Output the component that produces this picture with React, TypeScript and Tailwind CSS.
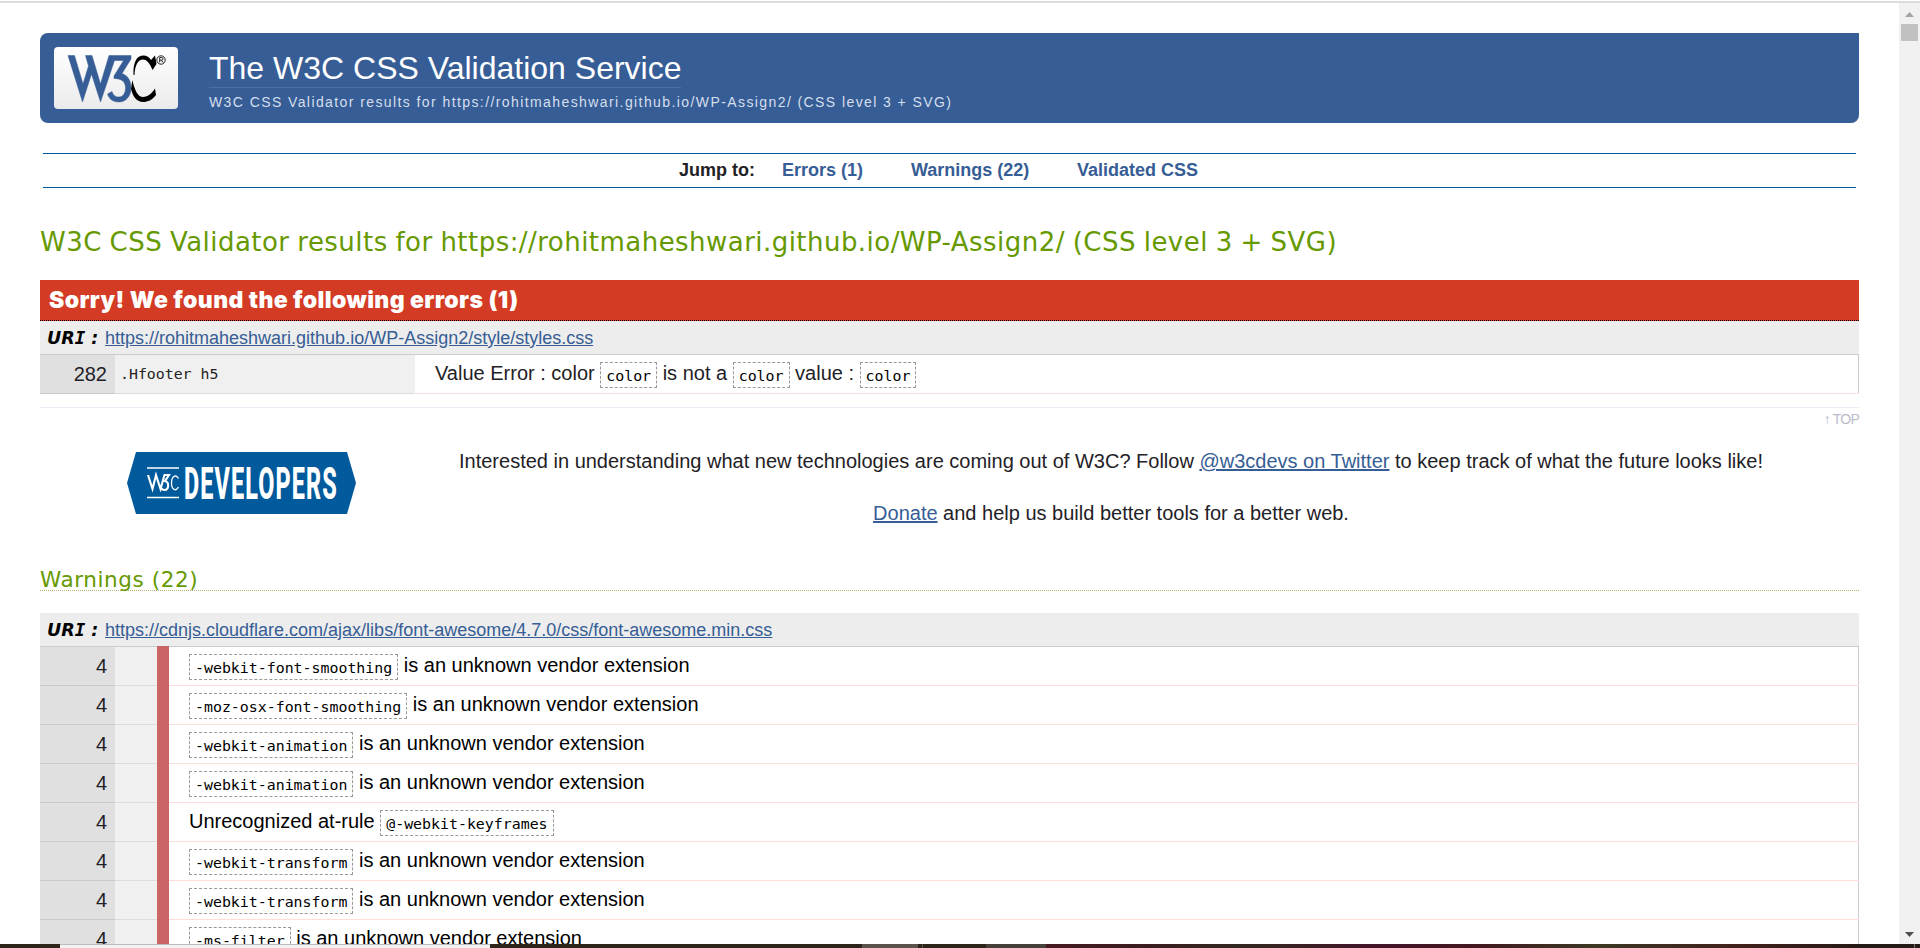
import React from "react";

function Code({ children }: { children: string }) {
  return (
    <code className="inline-block h-[26px] border border-dashed border-[#999] px-[5px] align-[-1px] font-['DejaVu_Sans_Mono',monospace] text-[14.9px] leading-[26px] text-black">
      {children}
    </code>
  );
}

const warnings: { before?: string; code: string; after?: string }[] = [
  { code: "-webkit-font-smoothing", after: "is an unknown vendor extension" },
  { code: "-moz-osx-font-smoothing", after: "is an unknown vendor extension" },
  { code: "-webkit-animation", after: "is an unknown vendor extension" },
  { code: "-webkit-animation", after: "is an unknown vendor extension" },
  { before: "Unrecognized at-rule", code: "@-webkit-keyframes" },
  { code: "-webkit-transform", after: "is an unknown vendor extension" },
  { code: "-webkit-transform", after: "is an unknown vendor extension" },
  { code: "-ms-filter", after: "is an unknown vendor extension" },
];

function UriBar({ href }: { href: string }) {
  return (
    <div className="flex h-[34px] items-center border-b border-[#ccc] bg-[#ededed] pl-[7px] text-[18px]">
      <span className="w-[58px] whitespace-pre pt-px font-['DejaVu_Sans',sans-serif] text-[17.5px] font-bold italic text-black">
        UR<span className="font-['DejaVu_Sans_Mono',monospace]">I</span> :
      </span>
      <a className="pt-px text-[#365d95] underline">{href}</a>
    </div>
  );
}

function W3CLogo() {
  return (
    <svg className="h-[62px] w-[124px]" viewBox="0 0 124 62">
      <defs>
        <linearGradient id="plate" x1="0" y1="0" x2="0" y2="1">
          <stop offset="0" stopColor="#fff" />
          <stop offset="1" stopColor="#ebebeb" />
        </linearGradient>
      </defs>
      <rect width="124" height="62" rx="4" fill="url(#plate)" />
      <path
        fill="#365d95"
        stroke="#365d95"
        strokeWidth="0.5"
        d="M14 8.500H20.500L29 37 34.500 19 31.500 8.500H38L46.500 37 55 8.500H77V12L68 26.500C74 28.500 77 34 77 41 77 49 72 55 65 55 59 55 55 52 53.500 47L58 44.500C59 48 61 50 65 50 69 50 71.500 46 71.500 41 71.500 35 68 31.500 60 31.500V29L69.500 13.500H60.500L46.500 55 37.500 27 28.500 55Z"
      />
      <path d="M101 8.500L102.500 17 98.500 23C96 17 93 12.500 89 12.500 84 12.500 81 18 80.500 28H79.500C79 17 82 8.500 89 8.500 93 8.500 95.500 10.500 97 13Z" />
      <path d="M78.300 33C81 44 84 50 89 50 94 50 98 46 101 41.500L102 48C98 53 94 55 89 55 83 55 79 50 77 42Z" />
      <circle cx="107" cy="13" r="4.200" fill="none" stroke="#222" strokeWidth="1" />
      <path d="M105.700 15.500v-5h2a1.300 1.300 0 0 1 0 2.600h-2m1.800 0l1.500 2.400" fill="none" stroke="#222" strokeWidth="1" />
    </svg>
  );
}

function DevelopersBadge() {
  return (
    <svg className="h-[62px] w-[229px]" viewBox="0 0 229 62">
      <path fill="#005a9c" d="M9 0h211l9 31-9 31H9L0 31z" />
      <path d="M20 16h32M20 45.500h32" stroke="#fff" strokeWidth="1.400" />
      <g fill="none" stroke="#fff" strokeWidth="2.100">
        <path d="M21 23l4.500 14 3.500-14 4.500 14 4-14h4.500l-4 6c4.500 1 4 9-.5 9-2 0-3-1-3.500-2.500" />
        <path d="M51.500 26.500c-3-5-7-2-7 4.500s4 9 7 4" strokeWidth="1.300" />
      </g>
      <text
        x="0"
        y="47"
        fill="#fff"
        fontFamily="Roboto, sans-serif"
        fontWeight="800"
        fontSize="45"
        textLength="294"
        lengthAdjust="spacing"
        transform="translate(57 0) scale(.52 1)"
      >
        DEVELOPERS
      </text>
    </svg>
  );
}

export default function App() {
  return (
    <div className="flex h-[948px] w-[1920px] flex-col overflow-hidden bg-white font-['Liberation_Sans',Arial,sans-serif] text-[20px] text-[#1f2126]">
      <div className="mt-px h-0.5 shrink-0 bg-[#dadce0]" />
      <div className="flex h-[941px] shrink-0">
        <main className="h-full w-[1899px] overflow-hidden px-10 pt-[30px]">
          <header className="flex h-[90px] rounded-lg rounded-tr-none bg-[#365d95] pl-[14px] pt-[14px]">
            <W3CLogo />
            <div className="ml-[31px]">
              <h1 className="h-[41px] w-[472px] whitespace-nowrap border-b border-[#4a6fa5] text-[32px] leading-[42px] text-white">
                The W3C CSS Validation Service
              </h1>
              <p className="mt-[5px] whitespace-nowrap text-[14px] leading-[18px] tracking-[1.41px] text-[#d5dfee]">
                W3C CSS Validator results for https://rohitmaheshwari.github.io/WP-Assign2/ (CSS level 3 + SVG)
              </p>
            </div>
          </header>

          <nav className="mx-[3px] mt-[30px] flex h-[35px] items-center border-y border-[#005a9c] pl-[636px] text-[18px] font-bold text-[#365d95]">
            <span className="w-[103px] text-[#1f2126]">Jump to:</span>
            <a className="w-[129px]">Errors (1)</a>
            <a className="w-[166px]">Warnings (22)</a>
            <a>Validated CSS</a>
          </nav>

          <h2 className="mt-[37px] h-[33px] whitespace-nowrap font-['DejaVu_Sans',sans-serif] text-[26px] leading-[35px] tracking-[0.46px] text-[#669900] [word-spacing:-0.9px]">
            W3C CSS Validator results for https://rohitmaheshwari.github.io/WP-Assign2/ (CSS level 3 + SVG)
          </h2>

          <h3 className="mt-[22px] h-[41px] border-b border-dotted border-black bg-[#d33b24] pl-[9px] font-['Inter',sans-serif] text-[23px] font-black leading-[40px] tracking-[0.4px] text-white">
            Sorry! We found the following errors (1)
          </h3>
          <UriBar href="https://rohitmaheshwari.github.io/WP-Assign2/style/styles.css" />
          <div className="flex h-[39px] leading-[38px]">
            <div className="w-[75px] border-b border-[#c9c9c9] bg-[#e0e0e0] pr-2 text-right">282</div>
            <div className="w-[300px] border-b border-[#ddd] bg-[#f0f0f0] pl-[5px] font-['DejaVu_Sans_Mono',monospace] text-[14.87px] text-[#222]">
              .Hfooter h5
            </div>
            <div className="flex-1 border-b border-[#fadddd]">
              <div className="h-full border-r border-[#ccc] pl-5 leading-[36px]">
                Value Error : color <Code>color</Code> is not a <Code>color</Code> value : <Code>color</Code>
              </div>
            </div>
          </div>

          <div className="mt-[13px] h-[15px] border-t border-[#ececf6]" />
          <div className="-mt-[12px] h-[19px] text-right text-[14px] leading-[18px] tracking-[-0.8px] text-[#b9bcca]">↑ TOP</div>

          <section className="mt-[9px] flex">
            <div className="flex h-[76px] w-[323px] items-end pl-[87px]">
              <DevelopersBadge />
            </div>
            <div className="flex-1 text-center">
              <p className="leading-[46px]">
                Interested in understanding what new technologies are coming out of W3C? Follow{" "}
                <a className="text-[#365d95] underline decoration-2 underline-offset-1">@w3cdevs on Twitter</a> to keep track of what the future looks like!
              </p>
              <p className="mt-[6px] leading-[46px]">
                <a className="text-[#365d95] underline decoration-2 underline-offset-1">Donate</a> and help us build better tools for a better web.
              </p>
            </div>
          </section>

          <h3 className="mt-[29px] h-[26px] border-b border-dotted border-[#b5b56b] font-['DejaVu_Sans',sans-serif] text-[21.5px] leading-[30px] tracking-[0.6px] text-[#669900]">
            Warnings (22)
          </h3>
          <div className="mt-[22px]">
            <UriBar href="https://cdnjs.cloudflare.com/ajax/libs/font-awesome/4.7.0/css/font-awesome.min.css" />
          </div>
          <div className="text-black">
            {warnings.map((w, i) => (
              <div key={i} className="flex h-[39px] leading-[38px]">
                <div className="w-[75px] border-b border-[#c9c9c9] bg-[#e0e0e0] pr-2 text-right text-[#1f2126]">4</div>
                <div className="w-[42px] border-b border-[#ddd] bg-[#f0f0f0]" />
                <div className="-mt-px w-3 bg-[#cb6464]" />
                <div className="flex-1 border-b border-[#ffdddd]">
                  <div className="h-full border-r border-[#ccc] pl-5 leading-[36px]">
                    {w.before} <Code>{w.code}</Code> {w.after}
                  </div>
                </div>
              </div>
            ))}
          </div>
        </main>
        <aside className="flex h-full w-[21px] flex-col items-center bg-[#f1f1f1] pt-[9px]">
          <svg className="h-[5px] w-[9px]" viewBox="0 0 9 5">
            <path fill="#a3a3a3" d="M0 5l4.500-5L9 5z" />
          </svg>
          <div className="mt-[7px] h-[17px] w-[17px] bg-[#c1c1c1]" />
          <svg className="mb-[7px] mt-auto h-[5px] w-[9px]" viewBox="0 0 9 5">
            <path fill="#505050" d="M0 0l4.500 5L9 0z" />
          </svg>
        </aside>
      </div>
      <div className="flex h-1 shrink-0 bg-[#2e241a]">
        <div className="ml-[60px] w-[430px] border-t border-[#bbb] bg-[#f2f2f2]" />
        <div className="ml-[372px] w-[56px] bg-[#5c534c]" />
        <div className="ml-1 w-px bg-[#5c534c]" />
        <div className="ml-[63px] w-[60px] bg-[#45403a]" />
        <div className="flex-1 bg-[linear-gradient(90deg,#451a20_0%,#3a1c1f_12%,#33291f_22%,#43152a_38%,#42191f_50%,#3b3824_63%,#42201c_80%,#231a15_95%)]" />
        <div className="w-px bg-[#777]" />
        <div className="w-[5px] bg-[#231a15]" />
      </div>
    </div>
  );
}
